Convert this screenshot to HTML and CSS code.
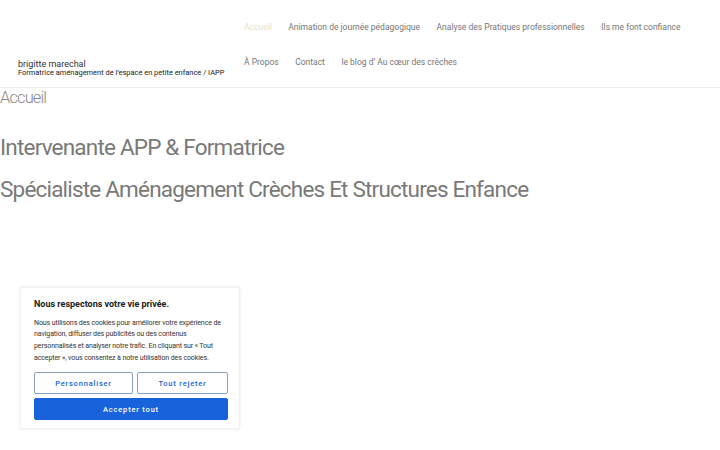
FILE: index.html
```html
<!DOCTYPE html>
<html lang="fr">
<head>
<meta charset="utf-8">
<title>brigitte marechal</title>
<link rel="stylesheet" href="styles.css">
</head>
<body>
<header class="site-header">
  <div class="branding">
    <div class="site-title">brigitte marechal</div>
    <div class="site-desc">Formatrice aménagement de l’espace en petite enfance / IAPP</div>
  </div>
  <nav class="main-nav">
    <ul class="menu">
      <li class="current">Accueil</li>
      <li>Animation de journée pédagogique</li>
      <li>Analyse des Pratiques professionnelles</li>
      <li>Ils me font confiance</li>
      <li>À Propos</li>
      <li>Contact</li>
      <li>le blog d’ Au cœur des crèches</li>
    </ul>
  </nav>
</header>
<main class="content">
  <h1 class="page-title">Accueil</h1>
  <h2 class="headline">Intervenante APP &amp; Formatrice</h2>
  <h2 class="headline">Spécialiste Aménagement Crèches Et Structures Enfance</h2>
</main>
<div class="cookie-box">
  <p class="cookie-title">Nous respectons votre vie privée.</p>
  <p class="cookie-text">Nous utilisons des cookies pour améliorer votre expérience de navigation, diffuser des publicités ou des contenus personnalisés et analyser notre trafic. En cliquant sur « Tout accepter », vous consentez à notre utilisation des cookies.</p>
  <div class="cookie-btns">
    <button class="btn btn-outline">Personnaliser</button>
    <button class="btn btn-outline">Tout rejeter</button>
    <button class="btn btn-accept">Accepter tout</button>
  </div>
</div>
</body>
</html>
```
FILE: styles.css
```css
html, body {
  margin: 0;
  padding: 0;
  background: #fff;
}
body {
  font-family: Roboto, "Liberation Sans", sans-serif;
  width: 720px;
  height: 450px;
  overflow: hidden;
}
.site-header {
  display: flex;
  align-items: flex-start;
  height: 87px;
  border-bottom: 1px solid #ececec;
  box-sizing: content-box;
}
.branding {
  width: 226px;
  padding: 59px 0 0 18px;
  box-sizing: border-box;
  flex: none;
}
.site-title {
  font-size: 9px;
  color: #333;
  line-height: 10px;
}
.site-desc {
  font-size: 7.45px;
  color: #222;
  line-height: 8.5px;
  white-space: nowrap;
}
.main-nav {
  padding-left: 18px;
}
.menu {
  list-style: none;
  margin: 0;
  padding: 9.5px 0 0;
  display: flex;
  flex-wrap: wrap;
  column-gap: 16.5px;
  width: 470px;
}
.menu li {
  font-size: 8.5px;
  color: #777;
  line-height: 35px;
  height: 35px;
  white-space: nowrap;
}
.menu li.current {
  color: #e6e2c8;
}
.page-title {
  margin: 0;
  font-family: Roboto, sans-serif;
  font-weight: 300;
  font-size: 16.5px;
  line-height: 20px;
  color: #888;
  letter-spacing: -0.9px;
}
.headline {
  margin: 0;
  font-family: Roboto, sans-serif;
  font-weight: 400;
  font-size: 22.5px;
  line-height: 42px;
  color: #797979;
  letter-spacing: -0.8px;
}
.page-title + .headline {
  margin-top: 18px;
}
.cookie-box {
  position: absolute;
  left: 20px;
  top: 287px;
  width: 220px;
  height: 142px;
  box-sizing: border-box;
  padding: 10px 13px 0 13px;
  background: #fff;
  border: 1px solid #f1f1f1;
  box-shadow: 0 0 4px rgba(0,0,0,0.08);
}
.cookie-title {
  margin: 0 0 6.7px;
  font-size: 9px;
  font-weight: 700;
  color: #212121;
  line-height: 12px;
}
.cookie-text {
  margin: 0 0 8.5px;
  font-size: 7.05px;
  color: #333;
  line-height: 11.7px;
  letter-spacing: -0.12px;
}
.cookie-btns {
  display: grid;
  grid-template-columns: 99px 91px;
  column-gap: 4px;
  row-gap: 4px;
}
.btn {
  font-family: Roboto, sans-serif;
  font-size: 7.5px;
  font-weight: 500;
  letter-spacing: 0.8px;
  height: 22px;
  padding: 0;
  cursor: pointer;
}
.btn-outline {
  background: #fff;
  color: #1863dc;
  border: 1.5px solid #8aa0bf;
  border-radius: 2px;
}
.btn-accept {
  grid-column: 1 / 3;
  background: #1863dc;
  color: #fff;
  border: 1px solid #1863dc;
  border-radius: 2px;
}
```
